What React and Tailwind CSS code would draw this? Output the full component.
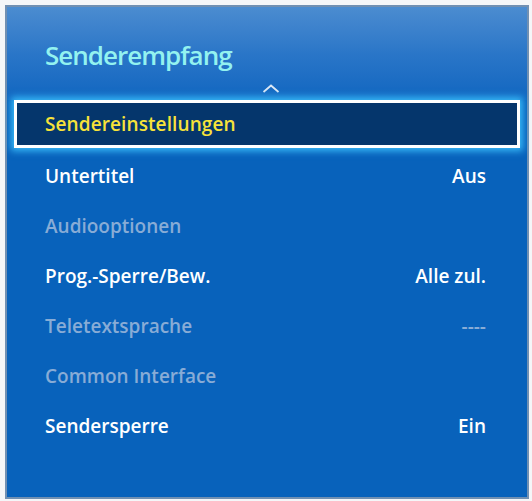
const items = [
  { label: 'Untertitel', value: 'Aus' },
  { label: 'Audiooptionen', disabled: true },
  { label: 'Prog.-Sperre/Bew.', value: 'Alle zul.' },
  { label: 'Teletextsprache', value: '----', disabled: true },
  { label: 'Common Interface', disabled: true },
  { label: 'Sendersperre', value: 'Ein' },
];

export default function App() {
  return (
    <div className="w-[532px] h-[501px] bg-[#f4f6f8] pl-[5px] pt-[5px]" style={{ fontFamily: '"Open Sans", "Noto Sans", sans-serif' }}>
      <div className="w-[524px] h-[494px] border-2 border-[#7190b2] bg-[#0862bb] flex flex-col">
        {/* Header */}
        <div className="h-[93px] bg-gradient-to-b from-[#4b8cd0] via-[#2a76c8] to-[#0f66c0] flex flex-col">
          <h1 className="pl-[38px] pt-[32px] text-[26px] leading-[32px] font-semibold tracking-[-1px] text-[#93f2f0]">
            Senderempfang
          </h1>
          <div className="flex justify-center mt-[13px] pl-[8px]">
            <svg width="18" height="9" viewBox="0 0 18 9">
              <polyline points="1.5,8 9,1.5 16.5,8" fill="none" stroke="#dce8f5" strokeWidth="1.8" />
            </svg>
          </div>
        </div>

        {/* Selected row */}
        <div className="mx-[7px] h-[48px] border-[3px] border-white bg-[#05366c] shadow-[0_0_7px_3px_#38b9f8] flex items-center pl-[28px]">
          <span className="text-[19px] font-semibold tracking-[0.1px] text-[#f7e23a]">Sendereinstellungen</span>
        </div>

        {/* Other rows */}
        <div className="mt-[3px] mx-[7px] flex flex-col">
          {items.map((item) => (
            <div key={item.label} className="h-[50px] flex items-center justify-between pl-[31px] pr-[34px]">
              <span className={`text-[19px] font-semibold ${item.disabled ? 'text-[#88acd6]' : 'text-white'}`}>
                {item.label}
              </span>
              {item.value && (
                <span className={`text-[19px] font-semibold ${item.disabled ? 'text-[#88acd6]' : 'text-white'}`}>
                  {item.value}
                </span>
              )}
            </div>
          ))}
        </div>
      </div>
    </div>
  );
}
